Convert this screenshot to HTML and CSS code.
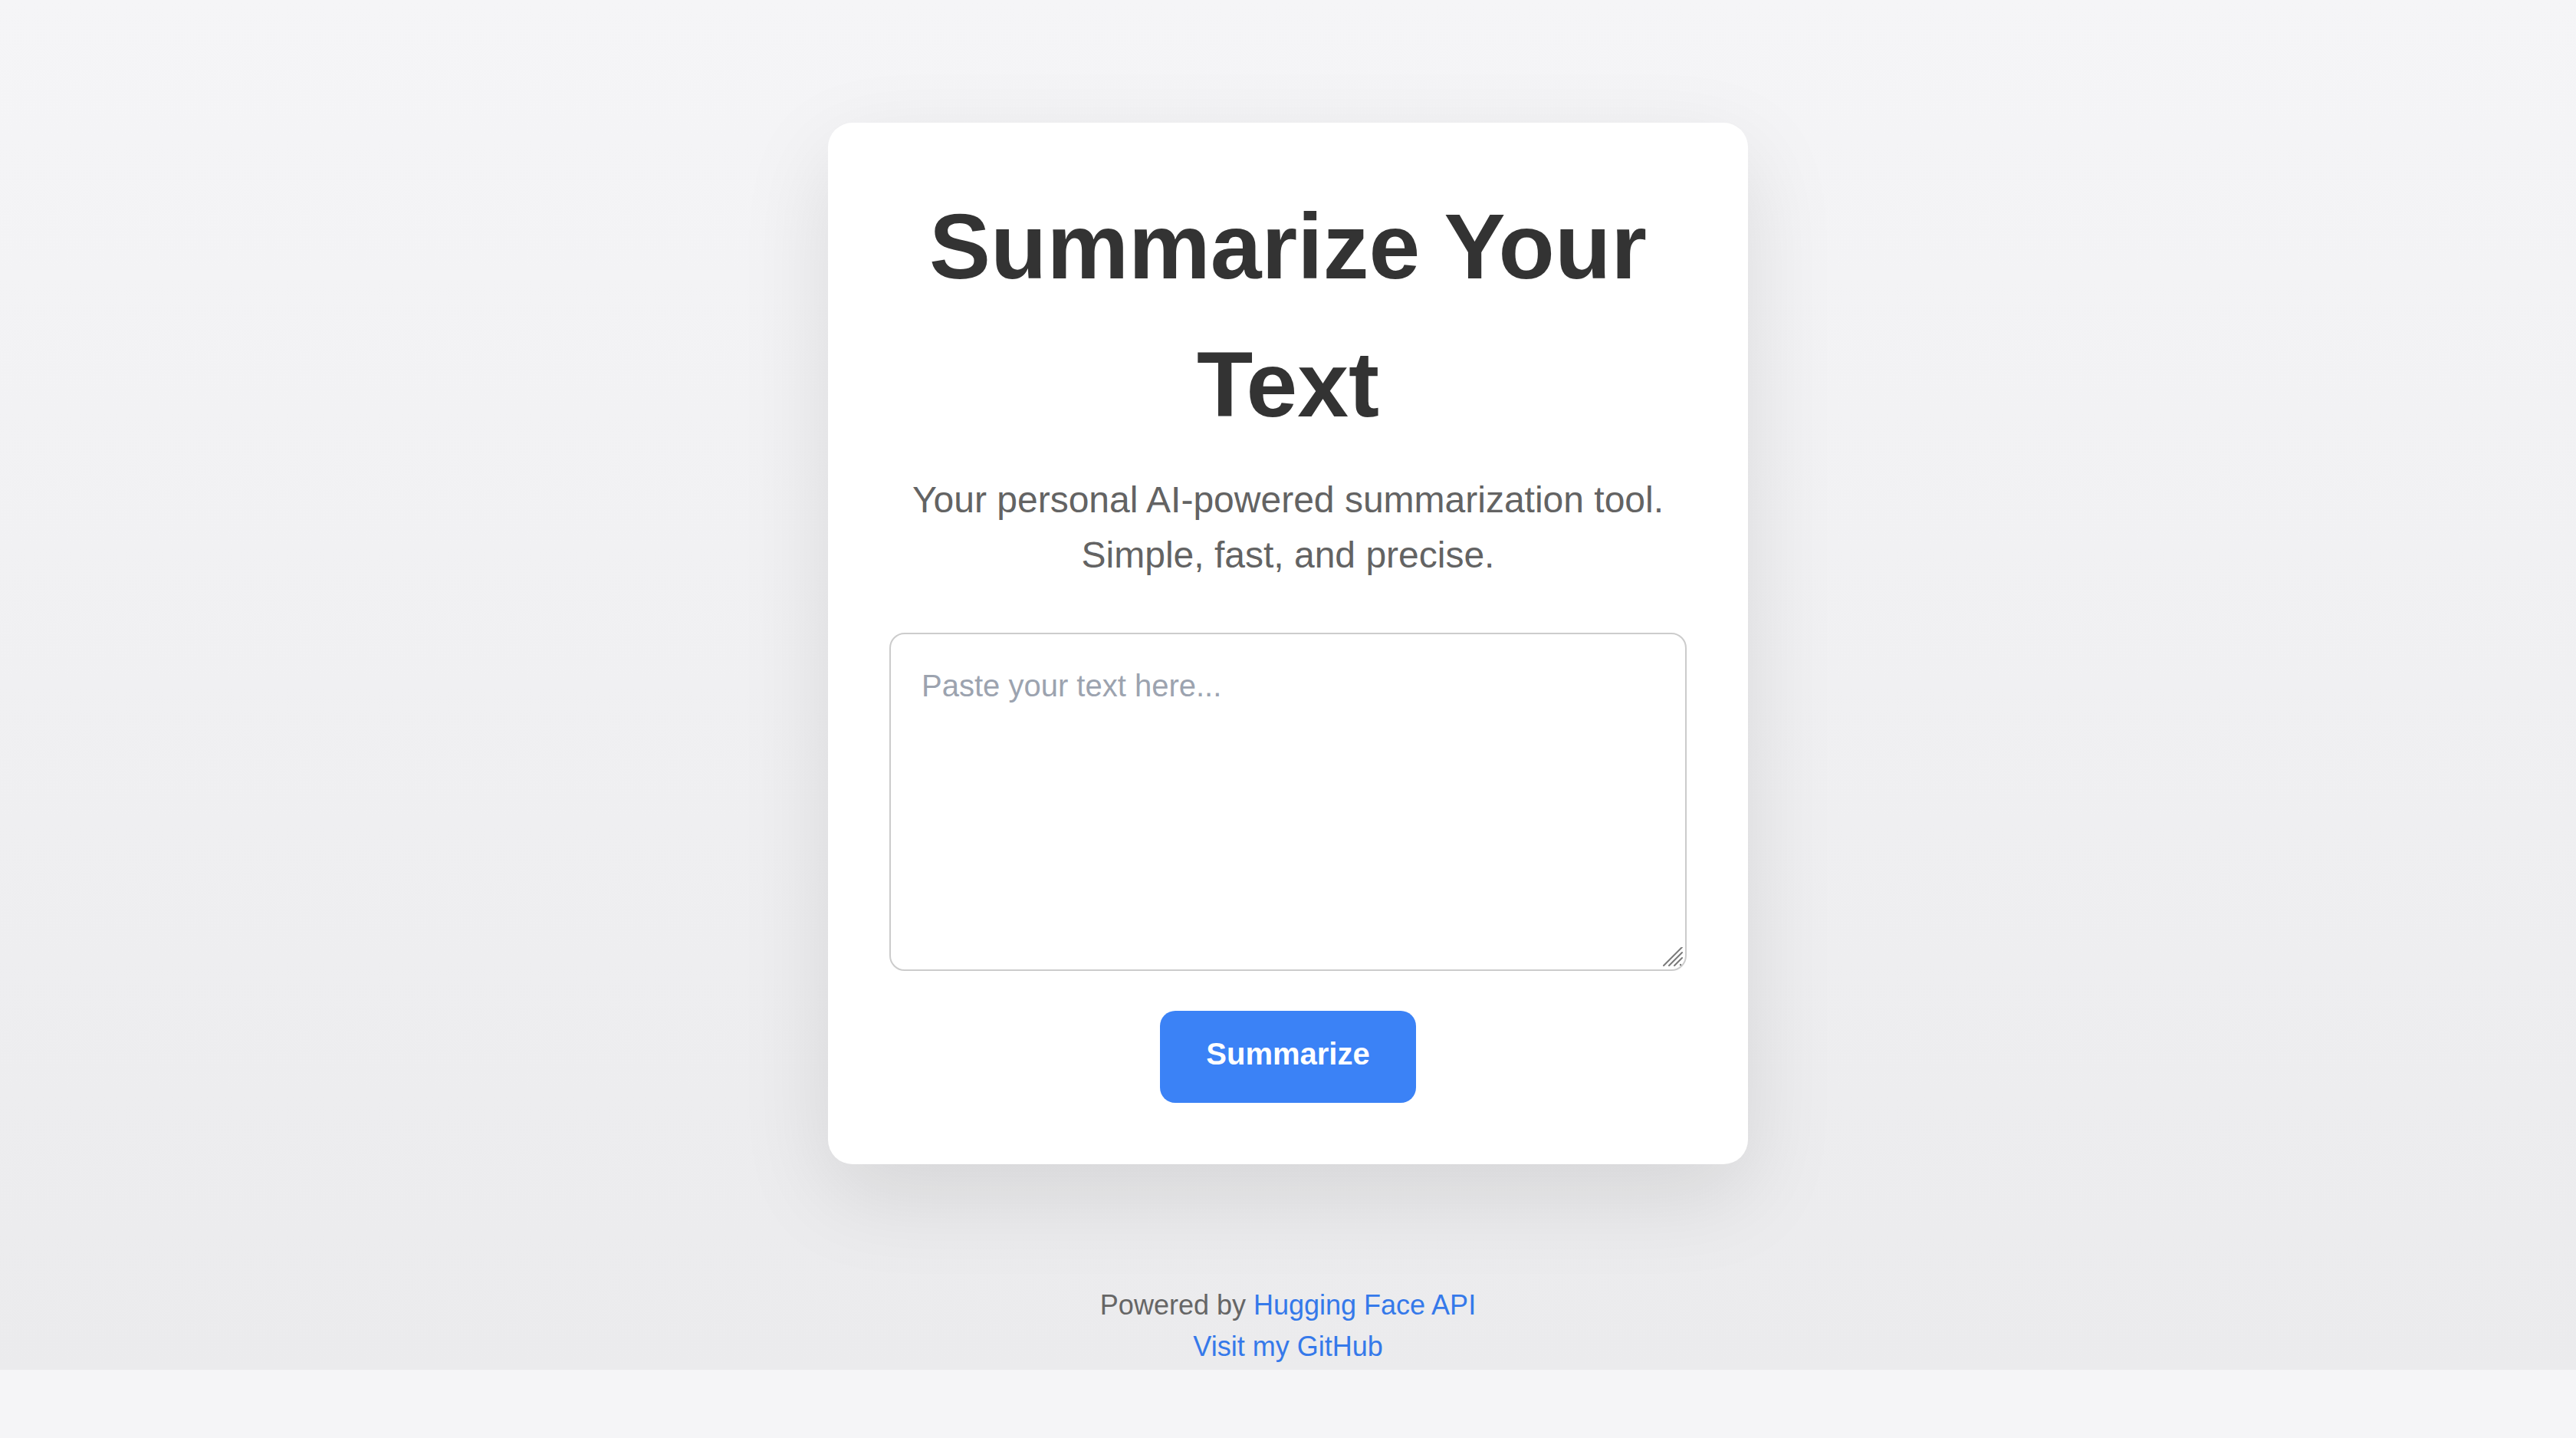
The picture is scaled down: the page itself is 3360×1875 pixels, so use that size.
FILE: index.html
```html
<!DOCTYPE html>
<html lang="en">
<head>
<meta charset="utf-8">
<title>Summarize Your Text</title>
<link rel="stylesheet" href="styles.css">
</head>
<body>
<div class="page">
  <main class="card">
    <h1 class="title">Summarize Your Text</h1>
    <p class="subtitle">Your personal AI-powered summarization tool. Simple, fast, and precise.</p>
    <div class="field">
      <textarea class="input" placeholder="Paste your text here..."></textarea>
      <svg class="grip" width="28" height="28" viewBox="0 0 28 28" aria-hidden="true">
        <path d="M1 24 L25 0 M8 24 L25 7 M15 24 L25 14" stroke="#7a7a7a" stroke-width="2" stroke-linecap="round" fill="none"/>
        <circle cx="23" cy="23" r="1.2" fill="#7a7a7a"/>
      </svg>
    </div>
    <button class="btn" type="button">Summarize</button>
  </main>
  <footer class="footer">
    <p class="footer-line">Powered by <a class="link" href="#">Hugging Face API</a></p>
    <p class="footer-line"><a class="link" href="#">Visit my GitHub</a></p>
  </footer>
</div>
</body>
</html>
```

FILE: styles.css
```css
html {
  background: #f5f5f7;
}

body {
  margin: 0;
  font-family: "Liberation Sans", Arial, Helvetica, sans-serif;
  color: #333333;
}

.page {
  background: linear-gradient(to bottom, #f5f5f7, #ebebed);
  padding: 160px 0 3px;
}

.card {
  box-sizing: border-box;
  width: 1200px;
  margin: 0 auto;
  padding: 80px;
  background: #ffffff;
  border-radius: 32px;
  box-shadow: 0 40px 120px rgba(0, 0, 0, 0.1);
  text-align: center;
}

.title {
  margin: -9px 0 29px;
  font-size: 120px;
  line-height: 180px;
  font-weight: 700;
  color: #333333;
}

.subtitle {
  margin: -4px 0 65px;
  font-size: 48px;
  line-height: 72px;
  color: #636363;
}

.field {
  position: relative;
}

.input {
  display: block;
  box-sizing: border-box;
  width: 100%;
  height: 441px;
  margin: 0;
  padding: 37px 40px 40px;
  border: 2px solid #cccccc;
  border-radius: 20px;
  font-family: "Liberation Sans", Arial, Helvetica, sans-serif;
  font-size: 40px;
  line-height: 60px;
  color: #333333;
  background: #ffffff;
  outline: none;
  resize: none;
}

.input::placeholder {
  color: #9ca3af;
}

.grip {
  position: absolute;
  right: 3px;
  bottom: 3px;
  pointer-events: none;
}

.btn {
  display: block;
  margin: 52px auto 0;
  padding: 33px 60px 41px;
  border: none;
  border-radius: 20px;
  background: #3b82f6;
  color: #ffffff;
  font-family: "Liberation Sans", Arial, Helvetica, sans-serif;
  font-size: 40px;
  font-weight: 700;
  line-height: 46px;
  cursor: pointer;
}

.footer {
  margin-top: 157px;
  text-align: center;
}

.footer-line {
  margin: 0;
  font-size: 36px;
  line-height: 54px;
  color: #666666;
}

.link {
  color: #3579ea;
  text-decoration: none;
}
```
